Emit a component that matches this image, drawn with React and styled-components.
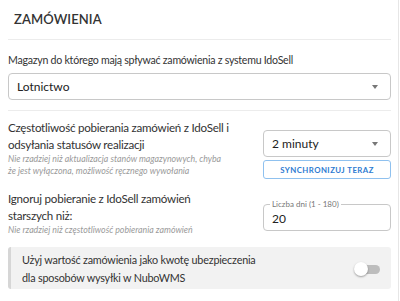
import React from 'react';
import styled, { createGlobalStyle } from 'styled-components';

const GlobalStyle = createGlobalStyle`
    body {
        margin: 0;
        background: #ffffff;
        font-family: "Lato", "Noto Sans", sans-serif;
        color: #333333;
    }
`;

const Card = styled.div`
    width: 383px;
    height: 301px;
    padding: 0 7px 0 8px;
    border-right: 1px solid #e6e6e6;
    overflow: hidden;
`;

const Heading = styled.h2`
    margin: 0;
    height: 40px;
    padding: 11px 0 0 6px;
    box-sizing: border-box;
    font-size: 13px;
    font-weight: 600;
    letter-spacing: 0.1px;
    color: #333;
    border-bottom: 1px solid #ececec;
`;

const Section = styled.div`
    padding: ${props => props.pad || '0'};
    border-bottom: ${props => props.divider ? '1px solid #ececec' : 'none'};
`;

const Label = styled.div`
    max-width: ${props => props.maxW ? props.maxW + 'px' : 'none'};
    font-size: ${props => props.size || 11.6}px;
    letter-spacing: -0.25px;
    line-height: 17px;
    color: #333;
`;

const Hint = styled.div`
    max-width: 218px;
    font-size: 8.8px;
    line-height: 12px;
    font-style: italic;
    color: #9a9a9a;
`;

const SelectBox = styled.div`
    position: relative;
    height: 27px;
    box-sizing: border-box;
    border: 1px solid #c8c8c8;
    border-radius: 4px;
    display: flex;
    align-items: center;
    padding-left: 8px;
    font-size: 12px;
    color: #222;

    &::after {
        content: '';
        position: absolute;
        right: 12px;
        top: 50%;
        margin-top: -2px;
        border-left: 3.5px solid transparent;
        border-right: 3.5px solid transparent;
        border-top: 4px solid #777;
    }
`;

const Row = styled.div`
    display: grid;
    grid-template-columns: 232px 128px;
    column-gap: 23px;
`;

const RightCol = styled.div`
    display: flex;
    flex-direction: column;
    gap: 3px;
    margin-top: ${props => props.mt || 0}px;
`;

const SyncButton = styled.button`
    height: 19px;
    box-sizing: border-box;
    border: 1px solid #8fc1ef;
    border-radius: 3px;
    background: #fff;
    color: #2e7bd1;
    font-family: "Lato", "Noto Sans", sans-serif;
    font-size: 7.8px;
    font-weight: 700;
    letter-spacing: 0.45px;
    padding: 0;
`;

const Field = styled.div`
    position: relative;
    height: 27px;
    box-sizing: border-box;
    border: 1px solid #c8c8c8;
    border-radius: 4px;
    padding: 0 8px;
    display: flex;
    align-items: center;
`;

const FieldLabel = styled.span`
    position: absolute;
    left: 6px;
    top: -6px;
    padding: 0 2px;
    background: #fff;
    font-size: 8px;
    line-height: 10px;
    color: #777;
`;

const FieldValue = styled.div`
    font-size: 12px;
    color: #222;
    margin-top: 2px;
`;

const ToggleBox = styled.div`
    margin-top: 11px;
    height: 42px;
    box-sizing: border-box;
    background: #f2f2f2;
    border-left: 3px solid #d6d6d6;
    border-radius: 3px;
    padding: 4px 11px 0 11px;
    display: flex;
    justify-content: space-between;
    align-items: flex-start;
`;

const ToggleText = styled.div`
    font-size: 10.8px;
    letter-spacing: -0.2px;
    line-height: 18px;
    color: #333;
`;

const Switch = styled.div`
    position: relative;
    width: 25px;
    height: 9px;
    border-radius: 5px;
    background: #bdbdbd;
    margin: 14px 0 0 0;

    &::before {
        content: '';
        position: absolute;
        left: -1px;
        top: -3px;
        width: 14px;
        height: 14px;
        border-radius: 50%;
        background: #fff;
        box-shadow: 0 1px 2px rgba(0, 0, 0, 0.35);
    }
`;

function App() {
    return (
        <Card>
            <GlobalStyle />
            <Heading>ZAMÓWIENIA</Heading>

            <Section pad="12px 0 10px 0" divider>
                <Label size={10.6}>Magazyn do którego mają spływać zamówienia z systemu IdoSell</Label>
                <div style={{ height: 4 }} />
                <SelectBox>Lotnictwo</SelectBox>
            </Section>

            <Section pad="8px 0 0 0">
                <Row>
                    <div>
                        <Label>Częstotliwość pobierania zamówień z IdoSell i odsyłania statusów realizacji</Label>
                        <Hint>Nie rzadziej niż aktualizacja stanów magazynowych, chyba że jest wyłączona, możliwość ręcznego wywołania</Hint>
                    </div>
                    <RightCol mt={11}>
                        <SelectBox>2 minuty</SelectBox>
                        <SyncButton>SYNCHRONIZUJ TERAZ</SyncButton>
                    </RightCol>
                </Row>
            </Section>

            <Section pad="11px 0 0 0">
                <Row>
                    <div>
                        <Label maxW={200}>Ignoruj pobieranie z IdoSell zamówień starszych niż:</Label>
                        <Hint>Nie rzadziej niż częstotliwość pobierania zamówień</Hint>
                    </div>
                    <RightCol mt={14}>
                        <Field>
                            <FieldLabel>Liczba dni (1 - 180)</FieldLabel>
                            <FieldValue>20</FieldValue>
                        </Field>
                    </RightCol>
                </Row>
            </Section>

            <ToggleBox>
                <ToggleText>
                    Użyj wartość zamówienia jako kwotę ubezpieczenia<br />
                    dla sposobów wysyłki w NuboWMS
                </ToggleText>
                <Switch />
            </ToggleBox>
        </Card>
    );
}

export default App;
